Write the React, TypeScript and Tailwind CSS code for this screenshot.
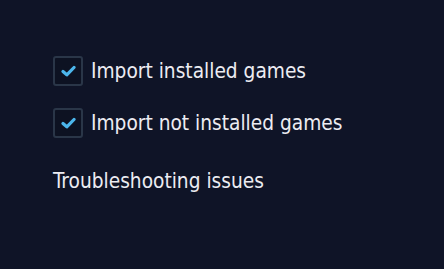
import React from "react";

function Check() {
  return (
    <div className="w-[30px] h-[30px] rounded-[3px] border-2 border-[#2a3648] bg-[#0d1222] flex items-center justify-center shrink-0">
      <svg width="15" height="12" viewBox="0 0 15 12" fill="none">
        <path d="M2 6.5 L5.8 9.8 L13 2.5" stroke="#4cb6ec" strokeWidth="3.2" strokeLinecap="round" strokeLinejoin="round" />
      </svg>
    </div>
  );
}

export default function App() {
  return (
    <div className="w-[444px] h-[269px] bg-[#0f1427] text-[#ececf2] pl-[53px] pt-[56px]" style={{ fontFamily: '"DejaVu Sans Condensed", "DejaVu Sans", sans-serif' }}>
      <div className="flex flex-col gap-[22px]">
        <div className="flex items-center gap-[8px]">
          <Check />
          <span className="text-[20.7px] leading-[30px]">Import installed games</span>
        </div>
        <div className="flex items-center gap-[8px]">
          <Check />
          <span className="text-[20.7px] leading-[30px]">Import not installed games</span>
        </div>
      </div>
      <div className="mt-[28px] text-[20.7px] leading-[30px]">Troubleshooting issues</div>
    </div>
  );
}
